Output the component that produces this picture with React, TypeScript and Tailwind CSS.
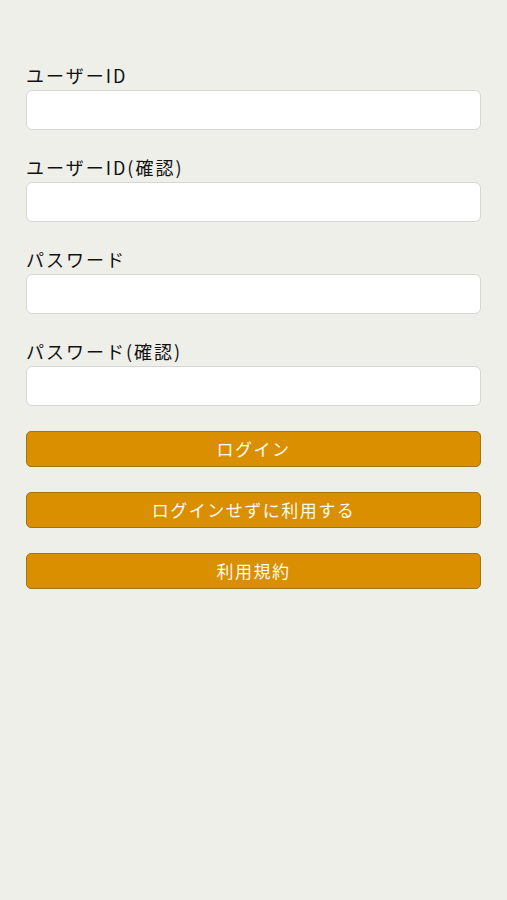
export default function App() {
  const fields = ["ユーザーID", "ユーザーID(確認)", "パスワード", "パスワード(確認)"];
  const buttons = ["ログイン", "ログインせずに利用する", "利用規約"];

  return (
    <div
      className="min-h-[900px] bg-[#efefea] px-[26px] pt-[63px]"
      style={{ fontFamily: '"Noto Sans CJK JP", "Noto Sans", sans-serif' }}
    >
      {/* Inputs */}
      <div className="flex flex-col gap-[25px]">
        {fields.map((label) => (
          <div key={label} className="flex flex-col gap-[3px]">
            <label className="text-[18px] leading-[24px] tracking-[2px] text-[#111]">{label}</label>
            <input
              type={label.startsWith("パスワード") ? "password" : "text"}
              className="h-[40px] w-full rounded-[6px] border border-[#d6d6d2] bg-white px-3 outline-none"
            />
          </div>
        ))}
      </div>

      {/* Buttons */}
      <div className="mt-[25px] flex flex-col gap-[25px]">
        {buttons.map((b) => (
          <button
            key={b}
            className="h-[36px] w-full rounded-[5px] border border-[#a47414] bg-[#d98f00] text-[17px] tracking-[1.5px] text-[#fdfaf2]"
          >
            {b}
          </button>
        ))}
      </div>
    </div>
  );
}
